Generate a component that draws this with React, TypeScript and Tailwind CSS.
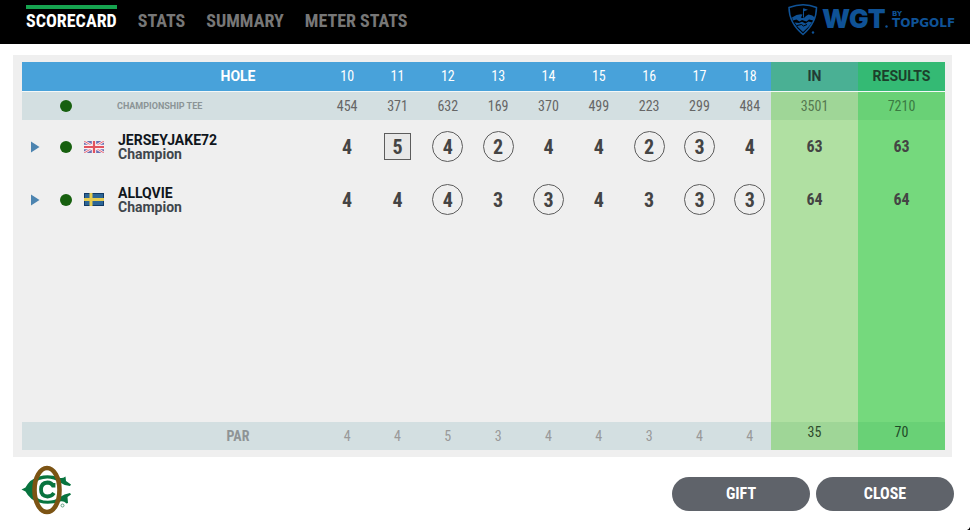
import React from 'react';
import clsx from 'clsx';


type Mark = 'circle' | 'square';

type Score = {
    value: number;
    mark?: Mark;
};

type Player = {
    name: string;
    level: string;
    country: 'gb' | 'se';
    scores: Score[];
    inScore: number;
    result: number;
};

const TABS = ['SCORECARD', 'STATS', 'SUMMARY', 'METER STATS'];
const HOLES = [10, 11, 12, 13, 14, 15, 16, 17, 18];
const YARDS = [454, 371, 632, 169, 370, 499, 223, 299, 484];
const PARS = [4, 4, 5, 3, 4, 4, 3, 4, 4];

const PLAYERS: Player[] = [
    {
        name: 'JERSEYJAKE72',
        level: 'Champion',
        country: 'gb',
        scores: [
            {value: 4},
            {value: 5, mark: 'square'},
            {value: 4, mark: 'circle'},
            {value: 2, mark: 'circle'},
            {value: 4},
            {value: 4},
            {value: 2, mark: 'circle'},
            {value: 3, mark: 'circle'},
            {value: 4},
        ],
        inScore: 63,
        result: 63,
    },
    {
        name: 'ALLQVIE',
        level: 'Champion',
        country: 'se',
        scores: [
            {value: 4},
            {value: 4},
            {value: 4, mark: 'circle'},
            {value: 3},
            {value: 3, mark: 'circle'},
            {value: 4},
            {value: 3},
            {value: 3, mark: 'circle'},
            {value: 3, mark: 'circle'},
        ],
        inScore: 64,
        result: 64,
    },
];

const NARROW = "font-['Roboto_Condensed',Roboto,sans-serif]";

const Flag = ({country}: {country: Player['country']}) => {
    if (country === 'gb') {
        return (
            <svg width="20" height="12" viewBox="0 0 20 12" aria-label="United Kingdom">
                <rect width="20" height="12" fill="#6a6fb0"/>
                <path d="M0 0L20 12M20 0L0 12" stroke="#f6e8f0" strokeWidth="2.6"/>
                <path d="M0 0L20 12M20 0L0 12" stroke="#e8707c" strokeWidth="1"/>
                <path d="M10 0V12M0 6H20" stroke="#fbeef2" strokeWidth="4.4"/>
                <path d="M10 0V12M0 6H20" stroke="#e2525e" strokeWidth="2.2"/>
            </svg>
        );
    }
    return (
        <svg width="20" height="13" viewBox="0 0 20 13" aria-label="Sweden">
            <rect width="20" height="13" fill="#123a66"/>
            <rect x="1" y="1" width="18" height="11" fill="#2c6596"/>
            <path d="M7 0V13M0 6.5H20" stroke="#e6cc50" strokeWidth="3"/>
        </svg>
    );
};

const TeeDot = () => <span className="block h-3 w-3 rounded-full bg-[#17600f]"/>;

const ScoreMark = ({value, mark}: Score) => (
    <span
        className={clsx(
            'flex items-center justify-center',
            mark === 'circle' && 'h-[31px] w-[31px] rounded-full border border-[#5c5c5c]',
            mark === 'square' && 'h-[27px] w-[27px] border border-[#5c5c5c] bg-[#e8e8e8]'
        )}
    >
        {value}
    </span>
);

const WgtLogo = () => (
    <svg width="170" height="36" viewBox="0 0 170 36" fill="#0f5296" aria-label="WGT by Topgolf">
        {/* shield */}
        <path
            d="M1 4.500Q15.500-1 28.500 4.500Q28.500 20 15 31.500Q1 20 1 4.500Z"
            fill="none"
            stroke="#0f5296"
            strokeWidth="1.500"
        />
        <path d="M15 5.500h1v9h-1zM15.500 5.200l4.500 1.600-4.500 1.800z"/>
        {/* green and bunkers */}
        <path d="M4 14.500Q10 10.500 14.500 11.500L13 14.500Q16 16 18 13L20.500 11.500Q25 12 26.500 14.500L25.500 17.500L21 16.500L18.500 18.500L14 17L11.500 18.500L8.500 16.500L5 17.500Z"/>
        <path d="M6.500 19.500L11 20L14 18.800L17.500 20.500L20.500 18.500L24 19.500Q20.500 24.500 15 29Q9.500 24.500 6.500 19.500Z"/>
        <path d="M9 22.500L13.500 21.500L15.500 23L19 21.500" fill="none" stroke="#000" strokeWidth="1"/>
        <circle cx="25" cy="29.500" r="1.200"/>
        <text x="34" y="25" fontSize="26" fontWeight="900" className="font-[Inter,sans-serif]">WGT</text>
        <circle cx="98.500" cy="23.500" r="1.200"/>
        <text x="104" y="13" fontSize="7" fontWeight="700" className="font-['DejaVu_Sans',sans-serif]">BY</text>
        <text x="104" y="24" fontSize="12" fontWeight="700" className="font-['DejaVu_Sans',sans-serif]">TOPGOLF</text>
    </svg>
);

const ClubLogo = () => (
    <svg width="52" height="50" viewBox="0 0 52 50" aria-label="Country club">
        {/* outer C */}
        <path
            d="M0.500 24.500L4.500 22.500Q9 14 18 11.500Q28 8.500 38 12.500Q41 14 44.500 11.500L45 16L50 19.500L49 21Q43 20.500 39 17.500Q29 11 18 15Q13 18 13 24.500Q13 31 18 34Q29 38.500 39 32Q43 29 49 28L50 29.500L46.500 32L47 38L45.500 38.500Q42.500 35.500 39 36.500Q28 40.500 18 37.500Q9 35 4.500 26.500Z"
            fill="#08743f"
        />
        {/* inner C */}
        <path
            d="M32.500 18V22.500M32.500 21.500Q30.500 17.500 26.500 17.500Q20 18 20 24.500Q20 31 26.500 31.500Q30.500 31.500 33 28"
            fill="none"
            stroke="#08743f"
            strokeWidth="3.800"
        />
        <ellipse cx="26" cy="25" rx="12.500" ry="22" fill="none" stroke="#7c5414" strokeWidth="4.600"/>
        <circle cx="41.500" cy="40.500" r="1.500" fill="none" stroke="#5f9f80" strokeWidth="1"/>
    </svg>
);

const PlayerRow = ({player}: {player: Player}) => (
    <tr className="h-[53px] text-xl font-bold text-[#444]">
        <th scope="row" className="p-0 text-left">
            <div className="flex items-center">
                <button aria-label={'Expand ' + player.name} className="ml-2 w-[30px]">
                    <svg width="10" height="12" viewBox="0 0 10 12">
                        <path d="M1 .500L9.500 6L1 11.500Z" fill="#4c84b0"/>
                    </svg>
                </button>
                <TeeDot/>
                <div className="ml-3 w-[34px]"><Flag country={player.country}/></div>
                <div className="font-[Roboto,sans-serif] text-sm leading-[14px]">
                    <div className="text-[#10161c]">{player.name}</div>
                    <div className="text-[#40464c]">{player.level}</div>
                </div>
            </div>
        </th>
        {player.scores.map((score, index) => (
            <td key={index} className="p-0 pl-2">
                <div className="flex justify-center"><ScoreMark {...score}/></div>
            </td>
        ))}
        <td className="bg-[#b0e0a2] p-0 text-base">{player.inScore}</td>
        <td className="bg-[#75d97d] p-0 text-base">{player.result}</td>
    </tr>
);

const Scorecard = () => (
    <table className={clsx('w-full table-fixed border-collapse text-center', NARROW)}>
        <colgroup>
            <col className="w-[296px]"/>
            {HOLES.map((hole) => <col key={hole}/>)}
            <col className="w-[87px]"/>
            <col className="w-[87px]"/>
        </colgroup>
        <thead>
            <tr className="h-[29px] border-b border-[#f4f8f8] bg-[#48a2da] text-sm text-white">
                <th scope="col" className="p-0 pl-34 font-[Roboto,sans-serif] font-bold">HOLE</th>
                {HOLES.map((hole) => (
                    <th key={hole} scope="col" className="p-0 pl-2 font-normal">{hole}</th>
                ))}
                <th scope="col" className="bg-[#4ab094] p-0 font-[Roboto,sans-serif] font-bold text-[#233b33]">IN</th>
                <th scope="col" className="bg-[#34ba74] p-0 font-[Roboto,sans-serif] font-bold text-[#1c3f2b]">RESULTS</th>
            </tr>
        </thead>
        <tbody>
            <tr className="h-[29px] bg-[#d3dfe1] text-sm text-[#666]">
                <th scope="row" className="p-0 text-left">
                    <div className="flex items-center pl-[38px]">
                        <TeeDot/>
                        <span className="ml-[45px] font-[Roboto,sans-serif] text-[9px] leading-3 font-bold text-[#8b9496]">
                            CHAMPIONSHIP TEE
                        </span>
                    </div>
                </th>
                {YARDS.map((yards, index) => <td key={index} className="p-0 pl-2">{yards}</td>)}
                <td className="bg-[#9fd697] p-0 text-[#55784f]">3501</td>
                <td className="bg-[#69d176] p-0 text-[#3a7a42]">7210</td>
            </tr>
            {PLAYERS.map((player) => <PlayerRow key={player.name} player={player}/>)}
            <tr className="h-[196px]">
                <td colSpan={10}/>
                <td className="bg-[#b0e0a2]"/>
                <td className="bg-[#75d97d]"/>
            </tr>
            <tr className="h-7 bg-[#d3dfe1] text-sm text-[#999]">
                <th scope="row" className="p-0 pl-34 font-bold text-[#8f9496]">PAR</th>
                {PARS.map((par, index) => <td key={index} className="p-0 pl-2">{par}</td>)}
                <td className="bg-[#9fd697] p-0 pb-2 leading-5 text-[#2d4a2d]">35</td>
                <td className="bg-[#69d176] p-0 pb-2 leading-5 text-[#1f4a27]">70</td>
            </tr>
        </tbody>
    </table>
);

const App = () => (
    <div className={clsx('relative flex min-h-screen flex-col bg-white', NARROW)}>
        <header className="flex h-11 items-start justify-between bg-black pr-3 pl-[26px]">
            <nav className="flex gap-[21px] pt-[5px]">
                {TABS.map((tab, index) => (
                    <button
                        key={tab}
                        className={clsx(
                            'border-t-4 text-lg leading-6 font-bold',
                            index === 0 ? 'border-[#16a34f] text-white' : 'border-transparent text-[#777]'
                        )}
                    >
                        {tab}
                    </button>
                ))}
            </nav>
            <div className="pt-[3px]"><WgtLogo/></div>
        </header>
        <main className="mt-[11px] mr-[18px] ml-[13px] bg-[#efefef] py-[7px] pr-[7px] pl-[9px]">
            <Scorecard/>
        </main>
        <footer className="flex items-start justify-between pt-2 pr-4 pl-[21px]">
            <ClubLogo/>
            <div className="flex gap-[6px] pt-3 text-base font-bold text-white">
                <button className="h-[34px] w-[138px] rounded-full bg-[#5f636a]">GIFT</button>
                <button className="h-[34px] w-[138px] rounded-full bg-[#5f636a]">CLOSE</button>
            </div>
        </footer>
        <svg className="absolute right-0 bottom-0" width="4" height="4" viewBox="0 0 4 4">
            <path d="M4 1V4H1Q3 3.500 4 1Z"/>
        </svg>
    </div>
);

export default App;
